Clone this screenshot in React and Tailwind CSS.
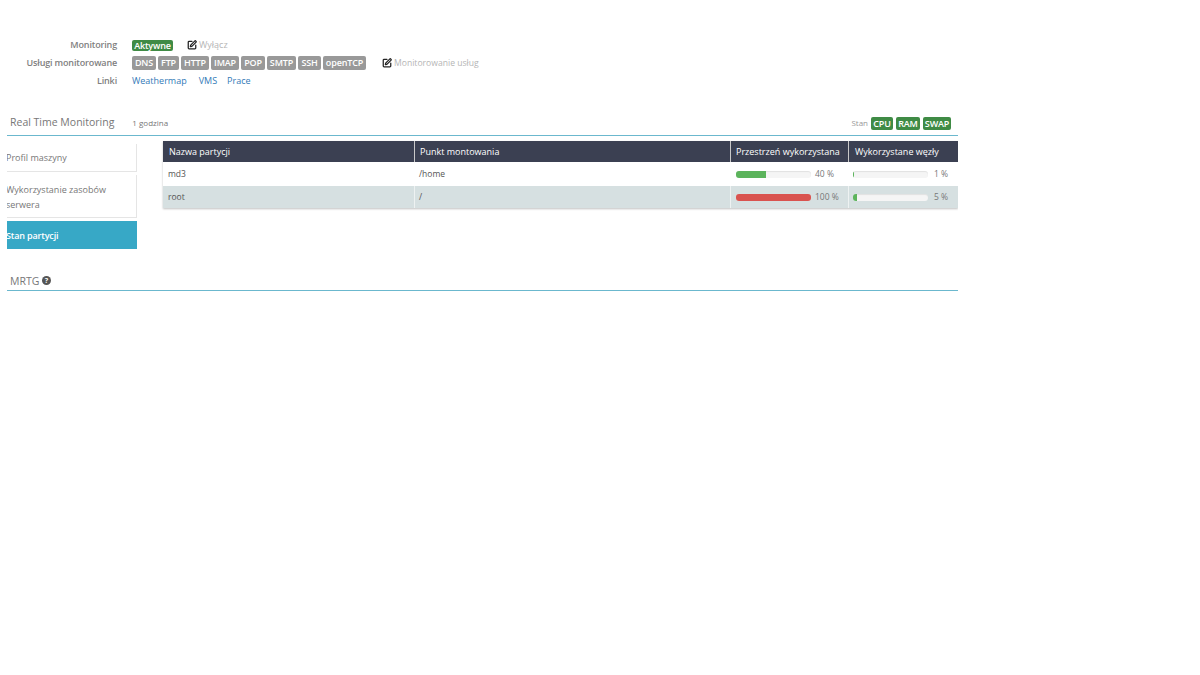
import { SquarePen } from "lucide-react";

const services = [
  ["DNS", "w-[24px]"],
  ["FTP", "w-[21px]"],
  ["HTTP", "w-[28px]"],
  ["IMAP", "w-[28px]"],
  ["POP", "w-[24px]"],
  ["SMTP", "w-[29px]"],
  ["SSH", "w-[23px]"],
  ["openTCP", "w-[43px]"],
];
const font = { fontFamily: '"Open Sans", sans-serif' };

function Badge({ children, className }) {
  return (
    <span
      className={`inline-block rounded-[2px] text-center text-[9px] font-semibold tracking-[-0.15px] text-white ${className}`}
    >
      {children}
    </span>
  );
}

function Row({ label, children, className }) {
  return (
    <div className={`flex items-center ${className}`}>
      <div className="w-[117px] shrink-0 text-right text-[9px] font-semibold tracking-[-0.15px] text-[#808080]">{label}</div>
      <div className="ml-[15px] flex items-center">{children}</div>
    </div>
  );
}

function EditLink({ children, className }) {
  return (
    <span className={`flex items-center text-[#b5b5b5] ${className}`}>
      <SquarePen size={10} strokeWidth={3} className="mr-[2px] text-[#222222]" />
      {children}
    </span>
  );
}

function Progress({ pct, color, pctClass }) {
  return (
    <div className="flex items-center">
      <div className="h-[7px] w-[75px] overflow-hidden rounded-[3px] bg-[#f5f5f5] shadow-[inset_0_1px_1px_rgba(0,0,0,0.08)]">
        <div className={`h-full ${color}`} style={{ width: `${pct}%` }} />
      </div>
      <span className={`text-[8.5px] text-[#777777] ${pctClass}`}>{pct} %</span>
    </div>
  );
}

export default function App() {
  return (
    <div className="h-[675px] w-[1200px] overflow-hidden bg-white" style={font}>
      <div className="pt-[38px]">
        <Row label="Monitoring" className="h-[14px]">
          <Badge className="w-[41px] bg-[#3f8b45] leading-[11px]">Aktywne</Badge>
          <EditLink className="ml-[14px] text-[9px]">Wyłącz</EditLink>
        </Row>
        <Row label="Usługi monitorowane" className="mt-[3px] h-[15px]">
          <div className="flex gap-[2px]">
            {services.map(([s, w]) => (
              <Badge key={s} className={`bg-[#999999] leading-[14px] ${w}`}>
                {s}
              </Badge>
            ))}
          </div>
          <EditLink className="ml-[16px] pt-[1px] text-[8.6px]">Monitorowanie usług</EditLink>
        </Row>
        <Row label="Linki" className="mt-[3px] h-[15px]">
          <div className="flex text-[9px] text-[#337ab7]">
            <span>Weathermap</span>
            <span className="ml-[12px]">VMS</span>
            <span className="ml-[10px]">Prace</span>
          </div>
        </Row>
      </div>

      <div className="ml-[7px] w-[951px] overflow-hidden">
        <div className="mt-[23px] flex h-[25px] items-center border-b border-[#6bb8ce] pr-[7px]">
          <span className="ml-[3px] text-[10.5px] text-[#777777]">Real Time Monitoring</span>
          <span className="ml-[18px] text-[8px] text-[#777777]">1 godzina</span>
          <div className="ml-auto flex items-center gap-[3px]">
            <span className="text-[8px] text-[#999999]">Stan</span>
            <Badge className="w-[22px] bg-[#3f8b45] leading-[13px]">CPU</Badge>
            <Badge className="w-[24px] bg-[#3f8b45] leading-[13px]">RAM</Badge>
            <Badge className="w-[28px] bg-[#3f8b45] leading-[13px]">SWAP</Badge>
          </div>
        </div>

        <div className="mt-[5px] flex items-start">
          <div className="w-[130px] shrink-0 pt-[3px] text-[9px] text-[#777777]">
            <div className="flex h-[28px] items-center border-r border-b border-[#e5e5e5] pt-[1px]">
              <span className="-ml-[1px]">Profil maszyny</span>
            </div>
            <div className="mt-[3px] flex h-[43px] items-center border-r border-b border-[#e5e5e5] pt-[1px] leading-[15px]">
              <span className="-ml-[1px]">
                Wykorzystanie zasobów
                <br />
                serwera
              </span>
            </div>
            <div className="mt-[3px] flex h-[28px] items-center bg-[#37a8c6] pt-[1px] font-semibold tracking-[-0.15px] text-white">
              <span className="-ml-[1px]">Stan partycji</span>
            </div>
          </div>

          <div className="ml-[26px] w-[795px] shadow-[0_1px_2px_rgba(0,0,0,0.25)]">
            <div className="flex h-[21px] items-center bg-[#3b4052] text-[9px] font-medium text-white">
              <div className="flex h-full w-[252px] items-center border-r border-[#c9c9c9] pl-[6px]">Nazwa partycji</div>
              <div className="flex h-full w-[316px] items-center border-r border-[#c9c9c9] pl-[5px]">Punkt montowania</div>
              <div className="flex h-full w-[118px] items-center border-r border-[#c9c9c9] pl-[5px]">Przestrzeń wykorzystana</div>
              <div className="flex h-full flex-1 items-center pl-[6px]">Wykorzystane węzły</div>
            </div>
            <div className="flex h-[24px] items-center bg-white pt-[1px] text-[8.5px] text-[#555555]">
              <div className="w-[252px] pl-[5px]">md3</div>
              <div className="w-[316px] pl-[4px]">/home</div>
              <div className="w-[118px] pl-[5px]">
                <Progress pct={40} color="bg-[#5cb45c]" pctClass="ml-[4px]" />
              </div>
              <div className="flex-1 pl-[4px]">
                <Progress pct={1} color="bg-[#5cb45c]" pctClass="ml-[6px]" />
              </div>
            </div>
            <div className="flex h-[22px] items-center bg-[#d6e0e1] text-[8.5px] text-[#555555]">
              <div className="flex h-full w-[252px] items-center border-r border-[#eef2f2] pl-[5px]">root</div>
              <div className="flex h-full w-[316px] items-center border-r border-[#eef2f2] pl-[4px]">/</div>
              <div className="flex h-full w-[118px] items-center border-r border-[#eef2f2] pl-[5px]">
                <Progress pct={100} color="bg-[#d9534f]" pctClass="ml-[4px]" />
              </div>
              <div className="flex-1 pl-[4px]">
                <Progress pct={5} color="bg-[#5cb45c]" pctClass="ml-[6px]" />
              </div>
            </div>
          </div>
        </div>

        <div className="mt-[19px] flex h-[23px] items-center border-b border-[#6bb8ce] pt-[5px]">
          <span className="ml-[3px] text-[10.5px] text-[#777777]">MRTG</span>
          <svg viewBox="0 0 10 10" className="ml-[3px] mb-[2px] h-[9px] w-[9px]">
            <circle cx="5" cy="5" r="5" fill="#555555" />
            <text x="5" y="8" textAnchor="middle" fontSize="8" fontWeight="700" fill="#ffffff">?</text>
          </svg>
        </div>
      </div>
    </div>
  );
}
